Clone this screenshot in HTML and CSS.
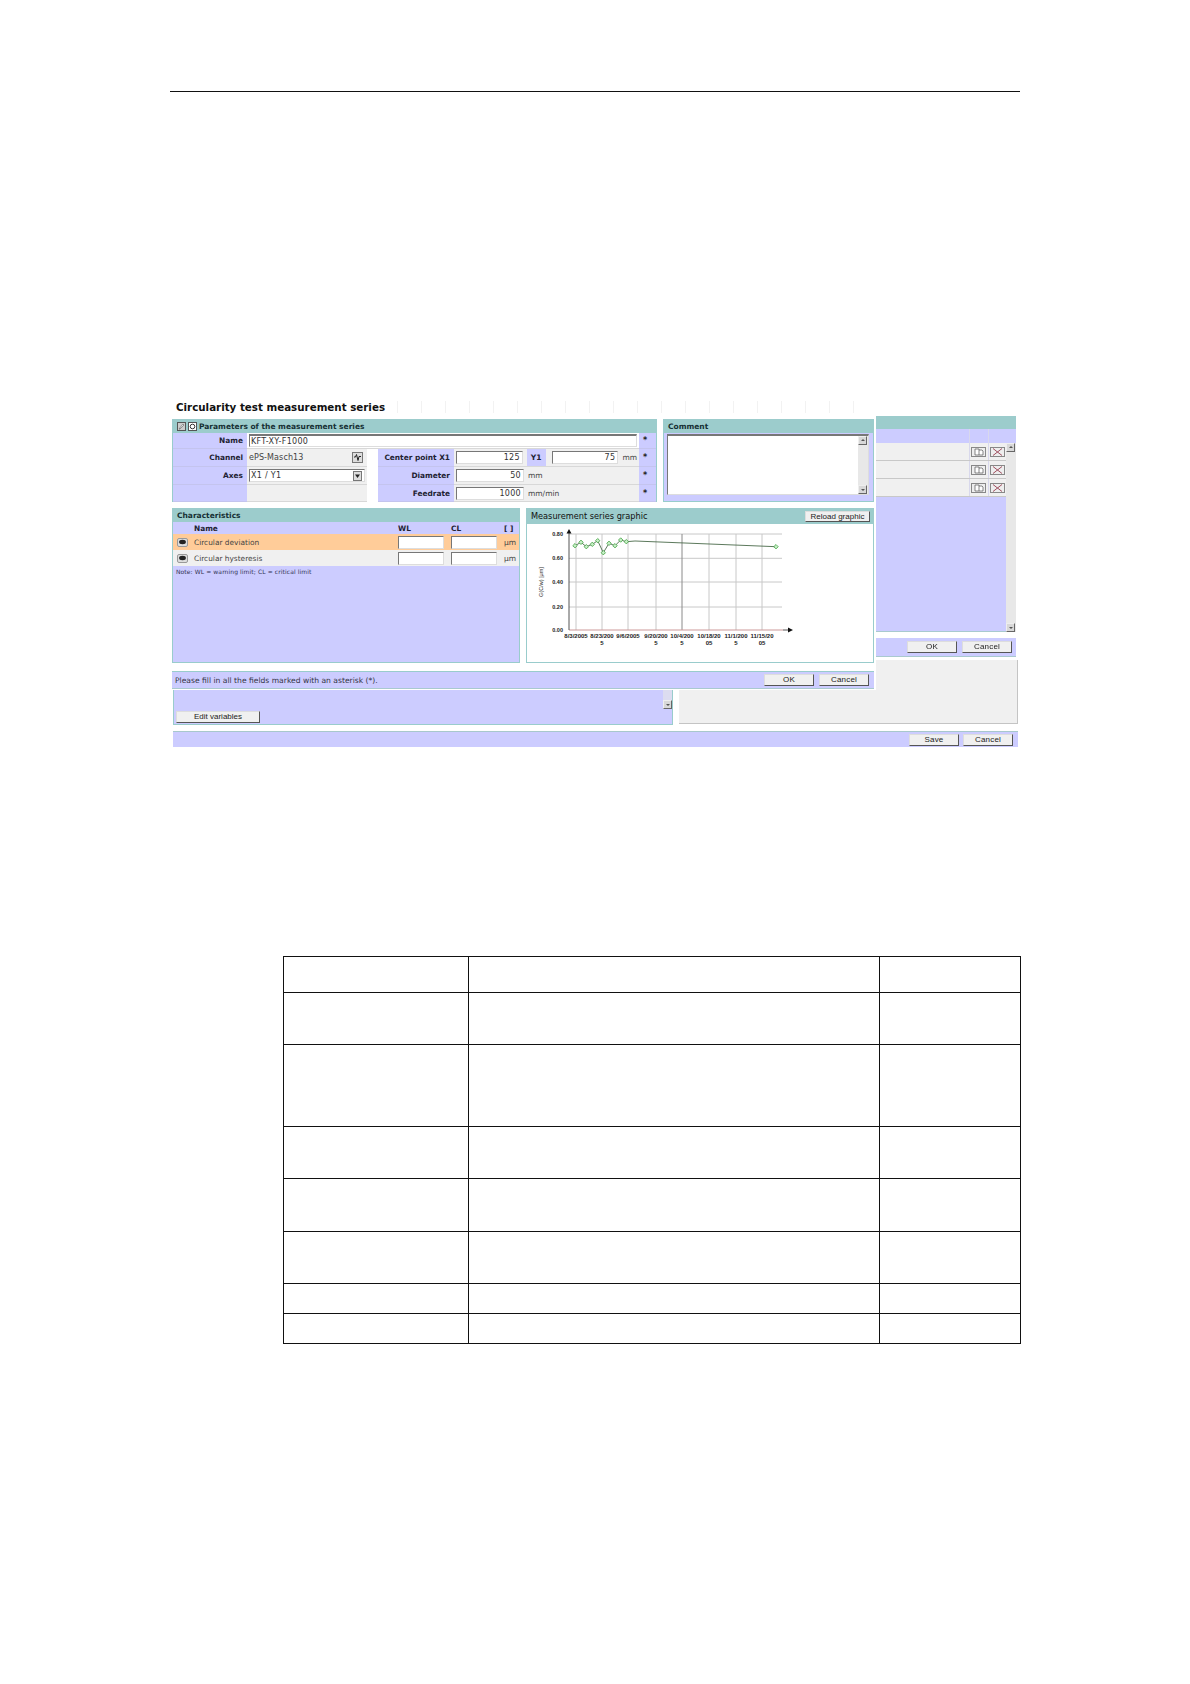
FILE: index.html
```html
<!DOCTYPE html>
<html lang="en">
<head>
<meta charset="utf-8">
<title>Circularity test measurement series</title>
<link rel="stylesheet" href="styles.css">
</head>
<body>
<div class="page">
  <div class="top-rule"></div>
  <div class="figure">
    <!-- back windows -->
    <div class="win win-gray"></div>
    <div class="win win-list">
      <div class="list-main">
        <div class="list-col">
          <div class="list-teal"></div>
          <div class="list-head"><span class="lh-fill"></span><span class="lh-cell"></span><span class="lh-cell"></span></div>
          <div class="list-row"><span class="lh-fill"></span><span class="icon-cell"><svg class="ico-act" viewBox="0 0 15 10"><rect x=".5" y=".5" width="14" height="9" fill="#eee" stroke="#888"/><path d="M4 2h4v6H4zM8 3h3l1 1v4H8" fill="#fff" stroke="#555" stroke-width=".7"/></svg></span><span class="icon-cell"><svg class="ico-act" viewBox="0 0 15 10"><rect x=".5" y=".5" width="14" height="9" fill="#eee" stroke="#888"/><path d="M3 1.5l9 7M12 1.5l-9 7" stroke="#a05060"/></svg></span></div>
          <div class="list-row"><span class="lh-fill"></span><span class="icon-cell"><svg class="ico-act" viewBox="0 0 15 10"><rect x=".5" y=".5" width="14" height="9" fill="#eee" stroke="#888"/><path d="M4 2h4v6H4zM8 3h3l1 1v4H8" fill="#fff" stroke="#555" stroke-width=".7"/></svg></span><span class="icon-cell"><svg class="ico-act" viewBox="0 0 15 10"><rect x=".5" y=".5" width="14" height="9" fill="#eee" stroke="#888"/><path d="M3 1.5l9 7M12 1.5l-9 7" stroke="#a05060"/></svg></span></div>
          <div class="list-row"><span class="lh-fill"></span><span class="icon-cell"><svg class="ico-act" viewBox="0 0 15 10"><rect x=".5" y=".5" width="14" height="9" fill="#eee" stroke="#888"/><path d="M4 2h4v6H4zM8 3h3l1 1v4H8" fill="#fff" stroke="#555" stroke-width=".7"/></svg></span><span class="icon-cell"><svg class="ico-act" viewBox="0 0 15 10"><rect x=".5" y=".5" width="14" height="9" fill="#eee" stroke="#888"/><path d="M3 1.5l9 7M12 1.5l-9 7" stroke="#a05060"/></svg></span></div>
          <div class="list-fill"></div>
        </div>
        <div class="vscroll vscroll-list"><span class="sb-btn sb-up"></span><span class="sb-btn sb-down"></span></div>
      </div>
      <div class="bar bar-list"><button class="btn">OK</button><button class="btn">Cancel</button></div>
    </div>
    <div class="win win-vars">
      <div class="vars-scroll"><span class="sb-btn sb-down"></span></div>
      <button class="btn btn-edit">Edit variables</button>
    </div>
    <div class="win win-bottom"><button class="btn">Save</button><button class="btn">Cancel</button></div>

    <!-- front dialog -->
    <div class="win win-dialog">
      <div class="title-row">
        <h1 class="title">Circularity test measurement series</h1>
        <div class="ruler"></div>
      </div>
      <div class="dlg-row dlg-row-1">
        <section class="panel params">
          <div class="ph">
            <svg class="ico-h" viewBox="0 0 9 9"><rect x=".5" y=".5" width="8" height="8" fill="#ccc" stroke="#555"/><path d="M2 7l4-5 1 1-4 4z" fill="#fff" stroke="#555" stroke-width=".6"/></svg>
            <svg class="ico-h" viewBox="0 0 9 9"><rect x=".5" y=".5" width="8" height="8" fill="#fff" stroke="#555"/><circle cx="4.5" cy="4.5" r="2.3" fill="none" stroke="#333"/></svg>
            <span>Parameters of the measurement series</span>
          </div>
          <div class="pgrid">
            <div class="lbl">Name</div>
            <div class="cell cell-name"><div class="inp inp-name">KFT-XY-F1000</div></div>
            <div class="star">*</div>

            <div class="lbl">Channel</div>
            <div class="cell gray chan"><span class="val">ePS-Masch13</span>
              <svg class="ico-chan" viewBox="0 0 11 11"><rect x=".5" y=".5" width="10" height="10" fill="#ddd" stroke="#777"/><path d="M2 5h1.5l1-2.5 1.5 6 1-4H9" fill="none" stroke="#222"/></svg></div>
            <div class="gap-cell"></div>
            <div class="lbl">Center point X1</div>
            <div class="cell gray fields"><div class="inp inp-num">125</div><div class="y1">Y1</div><div class="inp inp-num">75</div><span class="unit">mm</span></div>
            <div class="star">*</div>

            <div class="lbl">Axes</div>
            <div class="cell gray"><div class="inp inp-sel">X1 / Y1<svg class="ico-drop" viewBox="0 0 9 10"><rect x=".5" y=".5" width="8" height="9" fill="#ddd" stroke="#777"/><path d="M2 3.5h5L4.5 7z" fill="#222"/></svg></div></div>
            <div class="gap-cell"></div>
            <div class="lbl">Diameter</div>
            <div class="cell gray fields"><div class="inp inp-num">50</div><span class="unit">mm</span></div>
            <div class="star">*</div>

            <div class="lbl"></div>
            <div class="cell gray"></div>
            <div class="gap-cell"></div>
            <div class="lbl">Feedrate</div>
            <div class="cell gray fields"><div class="inp inp-num">1000</div><span class="unit">mm/min</span></div>
            <div class="star">*</div>
          </div>
        </section>
        <section class="panel comment">
          <div class="ph"><span>Comment</span></div>
          <div class="comment-body">
            <div class="textarea"><div class="vscroll"><span class="sb-btn sb-up"></span><span class="sb-btn sb-down"></span></div></div>
          </div>
        </section>
      </div>
      <div class="dlg-row dlg-row-2">
        <section class="panel chars">
          <div class="ph"><span>Characteristics</span></div>
          <div class="crow chead"><span></span><span class="cname">Name</span><span>WL</span><span>CL</span><span>[ ]</span></div>
          <div class="crow crow-sel">
            <svg class="ico-eye" viewBox="0 0 11 9"><rect x=".5" y=".5" width="10" height="8" rx="1.5" fill="#ddd" stroke="#999"/><ellipse cx="5.5" cy="4" rx="3.4" ry="2.2" fill="#222"/></svg>
            <span class="cname-t">Circular deviation</span><div class="inp inp-c"></div><div class="inp inp-c"></div><span class="unit">µm</span>
          </div>
          <div class="crow crow-norm">
            <svg class="ico-eye" viewBox="0 0 11 9"><rect x=".5" y=".5" width="10" height="8" rx="1.5" fill="#ddd" stroke="#999"/><ellipse cx="5.5" cy="4" rx="3.4" ry="2.2" fill="#222"/></svg>
            <span class="cname-t">Circular hysteresis</span><div class="inp inp-c"></div><div class="inp inp-c"></div><span class="unit">µm</span>
          </div>
          <p class="note">Note: WL = warning limit; CL = critical limit</p>
        </section>
        <section class="panel graphic">
          <div class="ph ph-graphic"><span class="ph-plain">Measurement series graphic</span><button class="btn btn-reload">Reload graphic</button></div>
          <svg class="chart" viewBox="0 0 345 138" width="345" height="138">
            <g class="grid">
              <path d="M42 10H255M42 34.3H255M42 58H255M42 83H255"/>
              <path d="M49 10V106M75 10V106M101 10V106M129 10V106M182 10V106M209 10V106M235 10V106"/>
            </g>
            <path class="grid-dark" d="M155 10V106"/>
            <path class="axis-x" d="M42 106H256"/>
            <path class="axis" d="M42 8V106M256 106H262"/>
            <path class="arrow" d="M42 5l-2.500 4.500h5zM266 106l-5-2.500v5z"/>
            <path class="series" d="M48 21.700L54 18.300L59.300 22.700L65.300 20.300L70.700 16.700L76.300 28.700L82 19.300L88 21.700L93.700 16L99.300 17.700L108 17L249 22.700"/>
            <g class="pts">
              <path d="M48 19.500l2.200 2.200-2.200 2.200-2.200-2.200zM54 16.100l2.200 2.200-2.200 2.200-2.200-2.200zM59.300 20.500l2.200 2.200-2.200 2.200-2.200-2.200zM65.300 18.100l2.200 2.200-2.200 2.200-2.200-2.200zM70.700 14.500l2.200 2.200-2.200 2.200-2.200-2.200zM76.300 26.500l2.200 2.200-2.200 2.200-2.200-2.200zM82 17.100l2.200 2.200-2.200 2.200-2.200-2.200zM88 19.500l2.200 2.200-2.200 2.200-2.200-2.200zM93.700 13.800l2.200 2.200-2.200 2.200-2.200-2.200zM99.300 15.500l2.200 2.200-2.200 2.200-2.200-2.200zM249 20.500l2.200 2.200-2.200 2.200-2.200-2.200z"/>
            </g>
            <g class="ylab">
              <text x="36" y="12">0.80</text><text x="36" y="36">0.60</text><text x="36" y="60">0.40</text><text x="36" y="85">0.20</text><text x="36" y="108">0.00</text>
            </g>
            <text class="yname" transform="translate(16 58) rotate(-90)">G(C/w) [µm]</text>
            <g class="xlab">
              <text x="49" y="114">8/3/2005</text>
              <text x="75" y="114">8/23/200</text><text x="75" y="121">5</text>
              <text x="101" y="114">9/6/2005</text>
              <text x="129" y="114">9/20/200</text><text x="129" y="121">5</text>
              <text x="155" y="114">10/4/200</text><text x="155" y="121">5</text>
              <text x="182" y="114">10/18/20</text><text x="182" y="121">05</text>
              <text x="209" y="114">11/1/200</text><text x="209" y="121">5</text>
              <text x="235" y="114">11/15/20</text><text x="235" y="121">05</text>
            </g>
          </svg>
        </section>
      </div>
      <div class="bar bar-msg"><span class="msg">Please fill in all the fields marked with an asterisk (*).</span><button class="btn">OK</button><button class="btn">Cancel</button></div>
    </div>
  </div>

  <table class="doc-table">
    <colgroup><col class="c1"><col class="c2"><col class="c3"></colgroup>
    <tbody>
      <tr class="r1"><td></td><td></td><td></td></tr>
      <tr class="r2"><td></td><td></td><td></td></tr>
      <tr class="r3"><td></td><td></td><td></td></tr>
      <tr class="r4"><td></td><td></td><td></td></tr>
      <tr class="r5"><td></td><td></td><td></td></tr>
      <tr class="r6"><td></td><td></td><td></td></tr>
      <tr class="r7"><td></td><td></td><td></td></tr>
      <tr class="r8"><td></td><td></td><td></td></tr>
    </tbody>
  </table>
</div>
</body>
</html>
```

FILE: styles.css
```css
* { box-sizing: border-box; }
html, body { margin: 0; padding: 0; background: #fff; }
body { font-family: "DejaVu Sans", sans-serif; color: #222; }
.page { width: 1190px; height: 1684px; padding: 91px 170px 0; overflow: hidden; }
.top-rule { height: 1px; background: #111; }

/* screenshot canvas */
.figure { position: relative; width: 850px; height: 350px; margin-top: 308px; filter: blur(.3px); }
.win { position: absolute; }
.win-gray { left: 509px; top: 260px; width: 339px; height: 64px; background: #f0f0f0; border-right: 1px solid #c4c4c4; border-bottom: 1px solid #c4c4c4; }
.win-list { left: 706px; top: 16px; width: 140px; height: 241px; display: flex; flex-direction: column; gap: 6px; }
.win-vars { left: 3px; top: 290px; width: 500px; height: 35px; background: #ccccff; border-left: 1px solid #9cc; border-right: 1px solid #9cc; border-bottom: 1px solid #9cc; padding: 21px 0 0 2px; }
.win-bottom { left: 3px; top: 331px; width: 845px; height: 16px; background: #ccccff; border-top: 1px solid #a8c8cc; display: flex; justify-content: flex-end; align-items: center; gap: 4px; padding-right: 5px; }
.win-dialog { left: 0; top: 0; width: 706px; height: 290px; background: #fff; padding: 0 2px; display: flex; flex-direction: column; }

/* right list window */
.list-main { flex: 1; display: flex; min-height: 0; }
.list-col { width: 130px; display: flex; flex-direction: column; border-bottom: 1px solid #a9c9cf; }
.list-teal { height: 13px; background: #9ccccc; margin-right: -10px; }
.list-head { height: 14px; display: flex; background: #ccccff; margin-right: -10px; padding-right: 10px; }
.list-row { height: 18px; display: flex; background: #f0f0f0; border-bottom: 1px solid #c8c8c8; }
.lh-fill { flex: 1; }
.lh-cell, .icon-cell { width: 18.500px; display: flex; align-items: center; justify-content: center; border-left: 1px solid #d8d8ec; }
.list-fill { flex: 1; background: #ccccff; }
.ico-act { width: 15px; height: 10px; display: block; }
.vscroll { width: 10px; display: flex; flex-direction: column; justify-content: space-between; background: #e8e8e8; }
.vscroll-list { margin-top: 27px; }
.sb-btn { display: block; width: 9px; height: 9px; background: #d8d8d8; border: 1px solid; border-color: #eee #666 #666 #eee; position: relative; }
.sb-up::after, .sb-down::after { content: ""; position: absolute; left: 1.500px; width: 0; height: 0; border-left: 2px solid transparent; border-right: 2px solid transparent; }
.sb-up::after { top: 2px; border-bottom: 2px solid #555; }
.sb-down::after { top: 2.500px; border-top: 2px solid #555; }

.bar { display: flex; align-items: center; justify-content: flex-end; gap: 5px; background: #ccccff; }
.bar-list { height: 19px; padding-right: 4px; border-bottom: 1px solid #a9c9cf; }
.btn { width: 50px; height: 12px; padding: 0; background: #f0f0f0; border: 1px solid; border-color: #ddd #555 #555 #ddd; font: 8px/10px "Liberation Sans", sans-serif; letter-spacing: .2px; color: #222; }
.btn-edit { width: 84px; display: block; letter-spacing: 0; }
.btn-reload { width: 65px; height: 11px; margin-right: 4px; letter-spacing: 0; }
.vars-scroll { position: absolute; left: 489px; top: 0; width: 9px; height: 19px; display: flex; align-items: flex-end; background: #dcdcf0; }

/* dialog content */
.title-row { height: 19px; display: flex; gap: 12px; }
.title { margin: 0 0 0 4px; font-size: 10.300px; line-height: 15px; font-weight: 700; color: #111; white-space: nowrap; }
.ruler { flex: 1; height: 12px; margin-top: 1px; background: repeating-linear-gradient(90deg, #f2f2f2 0 1px, transparent 1px 24px); }
.dlg-row { display: flex; gap: 6px; }
.dlg-row-1 { height: 83px; margin-bottom: 6px; }
.dlg-row-2 { height: 155px; margin-bottom: 8px; }
.panel { border: 1px solid #9cc; border-top: 0; display: flex; flex-direction: column; }
.ph { height: 14px; margin: 0 -1px; padding-left: 5px; background: #9ccccc; display: flex; align-items: center; gap: 1px; font-size: 7.500px; font-weight: 700; color: #163034; white-space: nowrap; flex: none; }
.ico-h { width: 9px; height: 9px; flex: none; margin-right: 1px; }
.ph-graphic { height: 16px; justify-content: space-between; }
.ph-plain { font-weight: 400; font-size: 8.200px; color: #111; }

.params { width: 485px; }
.comment { width: 211px; background: #ccccff; }
.pgrid { flex: 1; display: grid; grid-template-columns: 74px 120px 11px 76px 1fr 17px; grid-template-rows: 16px 18px 18px 17px; background: #f0f0f0; }
.lbl { background: #ccccff; padding-right: 4px; font-size: 7.400px; font-weight: 700; line-height: 15px; color: #223; border-bottom: 1px solid #c4c4ee; white-space: nowrap; display: flex; align-items: center; justify-content: flex-end; }
.cell { display: flex; align-items: center; font-size: 8px; padding: 0 2px; border-bottom: 1px solid #d8d8d8; min-width: 0; }
.cell-name { grid-column: span 4; background: #fff; }
.gray { background: #f0f0f0; }
.gap-cell { background: #fff; }
.star { background: #ccccff; padding-right: 5px; font-size: 8px; font-weight: 700; display: flex; align-items: center; justify-content: center; border-bottom: 1px solid #c4c4ee; }
.inp { background: #fff; height: 13px; border: 1px solid; border-color: #777 #ddd #ddd #777; font-size: 8px; line-height: 11px; padding: 0 2px 0 1px; color: #333; display: flex; align-items: center; letter-spacing: .3px; white-space: nowrap; }
.inp-name { width: 100%; border-top-width: 2px; }
.chan { justify-content: space-between; padding-right: 4px; }
.val { color: #444; letter-spacing: .1px; }
.ico-chan { width: 11px; height: 11px; }
.inp-sel { width: 116px; justify-content: space-between; padding-right: 2px; }
.ico-drop { width: 9px; height: 10px; }
.fields { gap: 0; }
.inp-num { width: 68px; justify-content: flex-end; }
.y1 { width: 19px; height: 17px; margin: 0 6px 0 4px; background: #ccccff; font-weight: 700; font-size: 7.500px; text-align: center; line-height: 17px; color: #223; }
.unit { color: #444; font-size: 7.500px; margin-left: 4px; }

.comment-body { flex: 1; background: #ccccff; padding: 1px 4px 6px 3px; }
.textarea { height: 100%; background: #fff; border: 1px solid; border-color: #777 #ddd #ddd #777; border-top-width: 2px; display: flex; justify-content: flex-end; }

.chars { width: 348px; background: #ccccff; }
.crow { display: grid; grid-template-columns: 20px 205px 53px 53px 1fr; align-items: center; }
.chead { height: 12px; font-size: 7.400px; font-weight: 700; color: #223; }
.cname { padding-left: 1px; }
.crow-sel { height: 16px; background: #ffcc99; }
.crow-norm { height: 16px; background: #f0f0f0; }
.ico-eye { width: 11px; height: 9px; margin-left: 4px; }
.cname-t { font-size: 7.400px; color: #444; padding-left: 1px; }
.crow .unit { margin-left: 0; }
.inp-c { width: 46px; height: 13px; }
.note { margin: 2px 0 0 3px; font-size: 6px; line-height: 8px; color: #335; letter-spacing: .1px; }

.graphic { width: 348px; background: #fff; }
.chart { display: block; }
.grid { fill: none; stroke: #c8c8c8; stroke-width: 1; }
.grid-dark { fill: none; stroke: #8a8a8a; }
.axis-x { stroke: #c99; fill: none; }
.axis { stroke: #555; fill: none; }
.arrow { fill: #111; }
.series { fill: none; stroke: #4a6a4a; stroke-width: .9; }
.pts path { fill: #c8f0c8; stroke: #3fa03f; stroke-width: .8; }
.ylab text { font: 700 5.500px "Liberation Sans", sans-serif; text-anchor: end; fill: #222; }
.xlab text { font: 700 6px "Liberation Sans", sans-serif; text-anchor: middle; fill: #222; }
.yname { font: 5.500px "Liberation Sans", sans-serif; text-anchor: middle; fill: #333; }

.bar-msg { height: 18px; border-top: 1px solid #9cc; border-bottom: 1px solid #a9c9cf; padding: 0 5px 0 3px; }
.msg { flex: 1; font-size: 7.600px; color: #334; white-space: nowrap; }

/* document table */
.doc-table { border-collapse: collapse; table-layout: fixed; width: 737px; margin: 206px 0 0 113px; }
.doc-table td { border: 1.500px solid #111; padding: 0; }
.c1 { width: 185px; }
.c2 { width: 411px; }
.c3 { width: 141px; }
.r1 { height: 36px; }
.r2 { height: 52px; }
.r3 { height: 82px; }
.r4 { height: 52px; }
.r5 { height: 53px; }
.r6 { height: 52px; }
.r7 { height: 30px; }
.r8 { height: 30px; }
```
